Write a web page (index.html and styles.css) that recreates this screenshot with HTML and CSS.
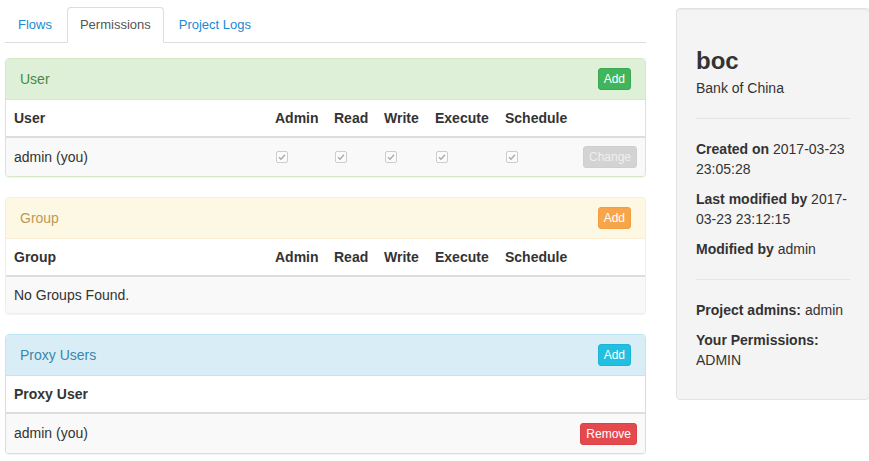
FILE: index.html
```html
<!DOCTYPE html>
<html>
<head>
<meta charset="utf-8">
<title>Permissions</title>
<link rel="stylesheet" href="styles.css">
</head>
<body>
<div class="page">
  <div class="main">
    <ul class="tabs">
      <li><a href="#">Flows</a></li>
      <li class="active"><a href="#">Permissions</a></li>
      <li><a href="#">Project Logs</a></li>
    </ul>

    <div class="panel panel-success">
      <div class="panel-heading">
        <span class="title">User</span>
        <button class="btn btn-success">Add</button>
      </div>
      <table class="perm">
        <colgroup>
          <col><col class="c-admin"><col class="c-read"><col class="c-write"><col class="c-exec"><col class="c-sched"><col class="c-act">
        </colgroup>
        <thead>
          <tr><th>User</th><th>Admin</th><th>Read</th><th>Write</th><th>Execute</th><th>Schedule</th><th></th></tr>
        </thead>
        <tbody>
          <tr>
            <td>admin (you)</td>
            <td><span class="cb"><svg viewBox="0 0 12 12" width="12" height="12"><path d="M3 6.3 L5 8.3 L9 3.8" fill="none" stroke="#a8a8a8" stroke-width="1.3"/></svg></span></td>
            <td><span class="cb"><svg viewBox="0 0 12 12" width="12" height="12"><path d="M3 6.3 L5 8.3 L9 3.8" fill="none" stroke="#a8a8a8" stroke-width="1.3"/></svg></span></td>
            <td><span class="cb"><svg viewBox="0 0 12 12" width="12" height="12"><path d="M3 6.3 L5 8.3 L9 3.8" fill="none" stroke="#a8a8a8" stroke-width="1.3"/></svg></span></td>
            <td><span class="cb"><svg viewBox="0 0 12 12" width="12" height="12"><path d="M3 6.3 L5 8.3 L9 3.8" fill="none" stroke="#a8a8a8" stroke-width="1.3"/></svg></span></td>
            <td><span class="cb"><svg viewBox="0 0 12 12" width="12" height="12"><path d="M3 6.3 L5 8.3 L9 3.8" fill="none" stroke="#a8a8a8" stroke-width="1.3"/></svg></span></td>
            <td class="act"><button class="btn btn-disabled">Change</button></td>
          </tr>
        </tbody>
      </table>
    </div>

    <div class="panel panel-warning">
      <div class="panel-heading">
        <span class="title">Group</span>
        <button class="btn btn-warning">Add</button>
      </div>
      <table class="perm">
        <colgroup>
          <col><col class="c-admin"><col class="c-read"><col class="c-write"><col class="c-exec"><col class="c-sched"><col class="c-act">
        </colgroup>
        <thead>
          <tr><th>Group</th><th>Admin</th><th>Read</th><th>Write</th><th>Execute</th><th>Schedule</th><th></th></tr>
        </thead>
        <tbody>
          <tr><td colspan="7">No Groups Found.</td></tr>
        </tbody>
      </table>
    </div>

    <div class="panel panel-info">
      <div class="panel-heading">
        <span class="title">Proxy Users</span>
        <button class="btn btn-info">Add</button>
      </div>
      <table class="perm">
        <colgroup><col><col class="c-act-wide"></colgroup>
        <thead>
          <tr><th>Proxy User</th><th></th></tr>
        </thead>
        <tbody>
          <tr>
            <td>admin (you)</td>
            <td class="act"><button class="btn btn-danger">Remove</button></td>
          </tr>
        </tbody>
      </table>
    </div>
  </div>

  <div class="side">
    <div class="well">
      <h3>boc</h3>
      <p class="desc">Bank of China</p>
      <hr>
      <p><strong>Created on</strong> 2017-03-23 23:05:28</p>
      <p><strong>Last modified by</strong> 2017-03-23 23:12:15</p>
      <p><strong>Modified by</strong> admin</p>
      <hr>
      <p><strong>Project admins:</strong> admin</p>
      <p><strong>Your Permissions:</strong><br>ADMIN</p>
    </div>
  </div>
</div>
</body>
</html>
```
FILE: styles.css
```css
* { box-sizing: border-box; }
html, body { margin: 0; padding: 0; }
body {
  font-family: "Liberation Sans", Arial, sans-serif;
  font-size: 14px;
  line-height: 20px;
  color: #333;
  background: #fff;
  overflow: hidden;
  width: 869px;
  height: 461px;
}
.page {
  display: flex;
  align-items: flex-start;
  padding: 7px 0 0 5px;
}
.main { width: 641px; flex: none; }
.side { width: 194px; flex: none; margin-left: 30px; margin-top: 1px; }

/* tabs */
.tabs {
  list-style: none;
  margin: 0 0 15px 0;
  padding: 0;
  display: flex;
  border-bottom: 1px solid #ddd;
}
.tabs li { margin-bottom: -1px; margin-right: 2px; }
.tabs a {
  display: block;
  padding: 7px 12px;
  font-size: 13px;
  line-height: 20px;
  border: 1px solid transparent;
  border-radius: 4px 4px 0 0;
  color: #1a8ad4;
  text-decoration: none;
}
.tabs li.active a {
  color: #555;
  background: #fff;
  border-color: #ddd #ddd transparent #ddd;
}

/* panels */
.panel {
  border: 1px solid #ddd;
  border-radius: 4px;
  margin-bottom: 20px;
  background: #fff;
  box-shadow: 0 1px 1px rgba(0,0,0,0.05);
  overflow: hidden;
}
.panel-heading {
  display: flex;
  align-items: center;
  justify-content: space-between;
  padding: 10px 14px 10px 14px;
  border-bottom: 1px solid transparent;
}
.panel-heading .title { line-height: 20px; }
.panel-heading .btn { margin-top: -2px; margin-bottom: -2px; }
.panel-success { border-color: #d6e9c6; }
.panel-success .panel-heading { background: #dff0d8; border-bottom-color: #d6e9c6; color: #468847; }
.panel-warning { border-color: #fbeed5; }
.panel-warning .panel-heading { background: #fcf8e3; border-bottom-color: #fbeed5; color: #c09853; }
.panel-info { border-color: #bce8f1; }
.panel-info .panel-heading { background: #d9edf7; border-bottom-color: #bce8f1; color: #3a87ad; }

/* table */
.perm {
  width: 100%;
  border-collapse: collapse;
  table-layout: fixed;
}
.perm th, .perm td {
  padding: 8px;
  text-align: left;
  vertical-align: middle;
  line-height: 20px;
}
.perm th {
  font-weight: bold;
  border-bottom: 2px solid #ddd;
}
.perm tbody tr { background: #f9f9f9; }
.perm td.act { text-align: right; }
.c-admin { width: 59px; }
.c-read { width: 50px; }
.c-write { width: 51px; }
.c-exec { width: 70px; }
.c-sched { width: 78px; }
.c-act { width: 70px; }
.c-act-wide { width: 90px; }

.cb {
  display: inline-block;
  width: 12px;
  height: 12px;
  border: 1px solid #cdcdcd;
  border-radius: 2px;
  background: #fbfbfb;
  vertical-align: middle;
  margin-left: 1px;
  position: relative;
  top: -1px;
}
.cb svg { display: block; margin: -1px 0 0 -1px; }

/* buttons */
.btn {
  font-family: inherit;
  font-size: 12px;
  line-height: 18px;
  padding: 1px 5px;
  border: 1px solid transparent;
  border-radius: 3px;
  color: #fff;
  cursor: pointer;
  vertical-align: middle;
}
.btn-success { background: #40b55b; border-color: #3aa853; }
.btn-warning { background: #f7a54a; border-color: #f29e40; }
.btn-info { background: #22c0e0; border-color: #1cb5d4; }
.btn-danger { background: #e44a4d; border-color: #d94245; }
.btn-disabled { background: #d3d3d3; border-color: #cfcfcf; color: #efefef; cursor: default; }

/* well */
.well {
  width: 194px;
  background: #f4f4f4;
  border: 1px solid #e3e3e3;
  border-radius: 4px;
  padding: 19px;
  box-shadow: inset 0 1px 1px rgba(0,0,0,0.05);
}
.well h3 {
  font-size: 24px;
  line-height: 26.4px;
  font-weight: bold;
  margin: 20px 0 4px 0;
}
.well p { margin: 0 0 10px 0; }
.well p.desc { margin: 0; }
.well hr {
  border: 0;
  border-top: 1px solid #e4e4e4;
  margin: 20px 0;
}
```
